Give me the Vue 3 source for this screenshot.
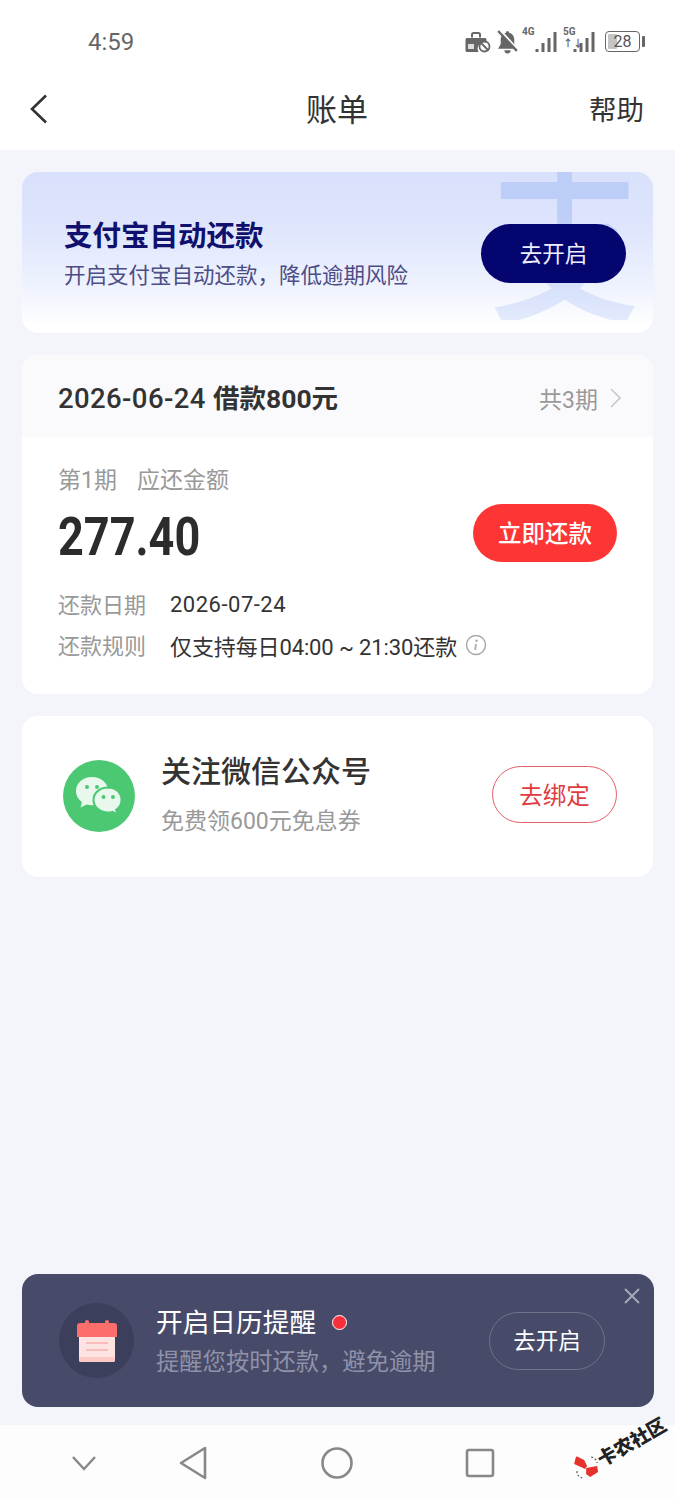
<script setup>
const details = [
  { label: '还款日期', value: '2026-07-24', info: false },
  { label: '还款规则', value: '仅支持每日04:00 ~ 21:30还款', info: true }
]
</script>

<template>
  <div class="page">
    <header class="top">
      <div class="status">
        <span class="time">4:59</span>
        <div class="status-icons">
          <svg class="ic" width="26" height="22" viewBox="0 0 26 22">
            <path d="M2 7h18a1.500 1.500 0 0 1 1.500 1.500V11a7 7 0 0 0-8 10H2a1.500 1.500 0 0 1-1.500-1.500v-11A1.500 1.500 0 0 1 2 7z" fill="#666"/>
            <path d="M7 6.500V3.500Q7 2 8.500 2h5Q15 2 15 3.500v3" fill="none" stroke="#666" stroke-width="2"/>
            <rect x="3" y="13" width="6" height="5" fill="#ddd"/>
            <circle cx="19.500" cy="15.500" r="5" fill="#fff" stroke="#666" stroke-width="1.800"/>
            <path d="M16 12l7 7" stroke="#666" stroke-width="1.800"/>
          </svg>
          <svg class="ic bell" width="23" height="25" viewBox="0 0 22 24">
            <path d="M11 2a1.500 1.500 0 0 1 1.500 1.500c3.500.8 5 3.600 5 7v4l2.500 4.500H2l2.500-4.500v-4c0-3.400 1.500-6.200 5-7A1.500 1.500 0 0 1 11 2z" fill="#666"/>
            <path d="M8 20.500h6a3 3 0 0 1-6 0z" fill="#666"/>
            <path d="M3.500 .5l17 19" stroke="#fff" stroke-width="2"/>
            <path d="M2 2l18 19" stroke="#666" stroke-width="2.200"/>
          </svg>
          <div class="signal">
            <span class="net">4G</span>
            <svg width="24" height="22" viewBox="0 0 24 22"><path d="M2 18v3M8 12v9M14 7v14M20 1v20" stroke="#666" stroke-width="3"/></svg>
          </div>
          <div class="signal five">
            <span class="net">5G<i>↑↓</i></span>
            <svg width="24" height="22" viewBox="0 0 24 22"><path d="M2 18v3M8 12v9M14 7v14M20 1v20" stroke="#666" stroke-width="3"/></svg>
          </div>
          <div class="battery">
            <div class="battery-box"><i class="battery-fill"></i><span>28</span></div>
            <i class="battery-tip"></i>
          </div>
        </div>
      </div>
      <nav class="navbar">
        <svg class="back" width="18" height="30" viewBox="0 0 18 30"><path d="M16 1.500L2 15l14 13.500" fill="none" stroke="#333" stroke-width="2.600"/></svg>
        <h1>账单</h1>
        <span class="help">帮助</span>
      </nav>
    </header>

    <main class="content">
      <section class="banner">
        <span class="banner-mark" aria-hidden="true">支</span>
        <div class="banner-text">
          <h2>支付宝自动还款</h2>
          <p>开启支付宝自动还款&#xFF0C;降低逾期风险</p>
        </div>
        <button class="btn-navy">去开启</button>
      </section>

      <section class="card bill">
        <div class="bill-head">
          <span class="bill-title">2026-06-24 <b>借款800元</b></span>
          <span class="bill-count">共3期
            <svg width="11" height="20" viewBox="0 0 11 20"><path d="M1 1l9 9-9 9" fill="none" stroke="#c8c8c8" stroke-width="1.600"/></svg>
          </span>
        </div>
        <div class="bill-body">
          <div class="due-label"><span>第1期</span><span>应还金额</span></div>
          <div class="amount-row">
            <span class="amount">277.40</span>
            <button class="btn-red">立即还款</button>
          </div>
          <div class="details">
            <div v-for="d in details" :key="d.label" class="detail">
              <span class="detail-label">{{ d.label }}</span>
              <span class="detail-value" :class="d.info ? 'tight' : 'spaced'">{{ d.value }}</span>
              <svg v-if="d.info" class="info" width="22" height="22" viewBox="0 0 22 22">
                <circle cx="11" cy="11" r="9.500" fill="none" stroke="#aaa" stroke-width="1.500"/>
                <circle cx="11.500" cy="6.800" r="1.200" fill="#aaa"/>
                <path d="M11 10l-.8 6" stroke="#aaa" stroke-width="1.800"/>
              </svg>
            </div>
          </div>
        </div>
      </section>

      <section class="card follow">
        <svg class="wechat" width="72" height="72" viewBox="0 0 72 72">
          <circle cx="36" cy="36" r="36" fill="#4cc873"/>
          <path d="M29 17c-9 0-16 6-16 14 0 4.500 2.300 8.500 6 11l-1.500 5.500 6-3c1.800.5 3.600.8 5.500.8 9 0 16-6 16-14.300S38 17 29 17z" fill="#e9f8ed"/>
          <path d="M45 27.500c-8.300 0-14.500 5.500-14.500 12.500S36.700 52.500 45 52.500c1.500 0 3-.2 4.400-.6l5 2.600-1.300-4.700c3.400-2.300 5.400-5.800 5.400-9.800 0-7-5.600-12.500-13.500-12.500z" fill="#e9f8ed" stroke="#4cc873" stroke-width="2"/>
          <circle cx="24" cy="27" r="2" fill="#4cc873"/><circle cx="34" cy="27" r="2" fill="#4cc873"/>
          <circle cx="40.500" cy="37" r="2" fill="#4cc873"/><circle cx="50" cy="37" r="2" fill="#4cc873"/>
        </svg>
        <div class="follow-text">
          <h3>关注微信公众号</h3>
          <p>免费领600元免息券</p>
        </div>
        <button class="btn-outline">去绑定</button>
      </section>
    </main>

    <section class="reminder">
      <div class="cal-wrap">
        <svg width="42" height="44" viewBox="0 0 42 44">
          <rect x="3" y="10" width="36" height="33" rx="2" fill="#fde3e1"/>
          <rect x="3" y="38" width="36" height="5" rx="2" fill="#fbc9c6"/>
          <path d="M1 7a3 3 0 0 1 3-3h34a3 3 0 0 1 3 3v11H1z" fill="#fb6e6b"/>
          <rect x="9" y="1" width="4" height="6" rx="2" fill="#fb6e6b"/>
          <rect x="29" y="1" width="4" height="6" rx="2" fill="#fb6e6b"/>
          <path d="M10 24h22M10 31h22" stroke="#f8bdb9" stroke-width="2"/>
        </svg>
      </div>
      <div class="reminder-text">
        <h3>开启日历提醒<i class="dot"></i></h3>
        <p>提醒您按时还款&#xFF0C;避免逾期</p>
      </div>
      <button class="btn-ghost">去开启</button>
      <svg class="close" width="16" height="16" viewBox="0 0 16 16"><path d="M1 1l14 14M15 1L1 15" stroke="#a9abbc" stroke-width="1.800"/></svg>
    </section>

    <footer class="sysnav">
      <svg width="26" height="18" viewBox="0 0 26 18"><path d="M2 3l11 12L24 3" fill="none" stroke="#888" stroke-width="2.400"/></svg>
      <svg width="28" height="34" viewBox="0 0 28 34"><path d="M26 2L2 17l24 15z" fill="none" stroke="#888" stroke-width="2.600" stroke-linejoin="round"/></svg>
      <svg width="32" height="32" viewBox="0 0 32 32"><circle cx="16" cy="16" r="14.500" fill="none" stroke="#888" stroke-width="2.600"/></svg>
      <svg width="30" height="30" viewBox="0 0 30 30"><rect x="2" y="2" width="26" height="26" rx="2" fill="none" stroke="#888" stroke-width="2.600"/></svg>
    </footer>

    <div class="watermark">
      <svg width="28" height="28" viewBox="0 0 28 28">
        <g transform="rotate(30 14 14)">
          <path d="M13 16L2 11l2-8 8 4 3 6z" fill="#e5322d"/>
          <path d="M14 15l11-2 1 6-8 5-4-3z" fill="#e5322d"/>
          <path d="M5 18q-1 5 5 7M19 4q5 1 6 6" fill="none" stroke="#555" stroke-width="1.200" stroke-dasharray="2 2"/>
        </g>
      </svg>
      <span>卡农社区</span>
    </div>
  </div>
</template>

<style>
html, body { margin: 0; background: #f4f5fa; }
</style>

<style scoped>
* { box-sizing: border-box; }
h1, h2, h3, p { margin: 0; font-weight: 400; }
button { border: 0; padding: 0; font-family: inherit; background: none; display: flex; align-items: center; justify-content: center; }

.page {
  position: relative;
  width: 675px;
  height: 1500px;
  display: flex;
  flex-direction: column;
  overflow: hidden;
  background: #f4f5fa;
  color: #333;
  font-family: Roboto, "Noto Sans CJK SC", sans-serif;
}

.top { background: #fff; height: 150px; display: flex; flex-direction: column; }
.status { height: 75px; display: flex; align-items: center; justify-content: space-between; padding: 8px 30px 0 88px; }
.time { font-size: 24px; color: #666; }
.status-icons { display: flex; align-items: center; gap: 5px; }
.ic { display: block; }
.bell { margin-right: 2px; }
.signal { position: relative; width: 30px; height: 24px; display: flex; justify-content: flex-end; align-items: flex-end; margin-bottom: 2px; }
.signal svg { margin-right: -3px; }
.net { position: absolute; left: -4px; top: -2px; font-size: 10px; line-height: 10px; font-weight: 700; color: #666; }
.net i { display: block; font-style: normal; font-size: 10px; line-height: 10px; margin-top: 2px; }
.five { margin-left: 3px; }
.five .net { left: -1px; }
.battery { display: flex; align-items: center; gap: 2px; margin-left: 6px; }
.battery-box { position: relative; width: 35px; height: 21px; border: 1.500px solid #666; border-radius: 4px; display: flex; align-items: center; justify-content: center; overflow: hidden; }
.battery-box span { position: relative; font-size: 16px; line-height: 18px; color: #555; }
.battery-fill { position: absolute; left: 2px; top: 2px; bottom: 2px; width: 9px; background: #c4c4c4; border-radius: 1px; }
.battery-tip { width: 3px; height: 11px; background: #666; border-radius: 1px; }

.navbar { flex: 1; display: grid; grid-template-columns: 1fr auto 1fr; align-items: center; padding: 0 31px 8px 30px; }
.navbar h1 { font-size: 31px; line-height: 42px; color: #333; margin-top: 4px; }
.back { display: block; }
.help { justify-self: end; font-size: 27.500px; line-height: 40px; color: #333; margin-top: 4px; }

.content { display: flex; flex-direction: column; gap: 22px; padding: 22px 22px 0; }

.banner {
  position: relative;
  height: 161px;
  border-radius: 16px;
  overflow: hidden;
  display: flex;
  align-items: center;
  justify-content: space-between;
  padding: 0 27px 0 42px;
  background: linear-gradient(180deg, #d9e0fb 0%, #dde4fc 30%, #eef2fe 70%, #ffffff 95%);
}
.banner-mark {
  position: absolute;
  left: 468px;
  top: -32px;
  font-size: 150px;
  line-height: 150px;
  font-weight: 500;
  font-family: "Noto Sans CJK SC", sans-serif;
  color: #bccdf8;
  transform: scaleY(1.2);
  transform-origin: top;
  -webkit-mask-image: linear-gradient(180deg, #000 40%, rgba(0,0,0,.55) 65%, rgba(0,0,0,.4) 100%);
  mask-image: linear-gradient(180deg, #000 40%, rgba(0,0,0,.55) 65%, rgba(0,0,0,.4) 100%);
}
.banner-text { position: relative; padding-top: 4px; }
.banner h2 { font-size: 28.500px; line-height: 40px; font-weight: 700; color: #10106e; }
.banner p { font-size: 21.500px; line-height: 32px; margin-top: 3px; color: #4d4d86; }
.btn-navy { position: relative; width: 145px; height: 59px; border-radius: 30px; background: #05056f; color: #eef; font-size: 22.500px; margin-top: 2px; padding-bottom: 4px; }

.card { background: #fff; border-radius: 16px; overflow: hidden; }
.bill-head { height: 82px; background: #fafafc; display: flex; align-items: center; justify-content: space-between; padding: 5px 32px 0 36px; }
.bill-title { font-size: 27.500px; letter-spacing: .4px; line-height: 40px; font-weight: 500; color: #333; }
.bill-title b { font-size: 26.500px; letter-spacing: 0; font-weight: 700; }
.bill-count { display: flex; align-items: center; gap: 12px; font-size: 23px; color: #999; margin-top: -2px; }
.bill-body { padding: 24px 36px 0; height: 257px; }
.due-label { display: flex; gap: 20px; font-size: 23px; line-height: 36px; color: #999; margin-top: 2px; }
.amount-row { display: flex; align-items: center; justify-content: space-between; margin-top: 5px; height: 58px; }
.amount { font-size: 53px; font-weight: 700; color: #2c2c2c; margin-top: 8px; transform: scaleX(.85); transform-origin: left center; }
.btn-red { width: 144px; height: 58px; border-radius: 29px; background: #fd3535; color: #fff; font-size: 23.500px; font-weight: 500; font-family: "Noto Sans CJK SC", sans-serif; padding-bottom: 2px; }
.details { margin-top: 24px; display: flex; flex-direction: column; gap: 5px; }
.detail { display: flex; align-items: center; height: 36px; }
.detail-label { width: 112px; font-size: 22px; color: #999; margin-top: -2px; }
.detail-value { color: #333; font-size: 22px; }
.spaced { letter-spacing: .5px; }
.tight { letter-spacing: -.12px; margin-top: -1px; }
.info { margin-left: 8px; }

.follow { height: 161px; display: flex; align-items: center; padding: 0 36px 0 41px; }
.wechat { display: block; flex: none; margin-top: -2px; }
.follow-text { flex: 1; margin-left: 26px; margin-top: -7px; }
.follow h3 { font-size: 30px; line-height: 42px; font-weight: 500; color: #333; font-family: "Noto Sans CJK SC", sans-serif; }
.follow p { font-size: 23px; line-height: 34px; margin-top: 15px; color: #999; }
.btn-outline { width: 125px; height: 57px; border: 1px solid #e2606a; border-radius: 29px; color: #e0393f; font-size: 23.500px; background: #fff; margin-top: -4px; padding-bottom: 2px; }

.reminder {
  position: relative;
  margin: auto 21px 0 22px;
  height: 133px;
  flex: none;
  background: #474a68;
  border-radius: 16px;
  display: flex;
  align-items: center;
  padding: 0 49px 0 37px;
}
.cal-wrap { width: 75px; height: 75px; border-radius: 50%; background: #3c3f5c; display: flex; align-items: center; justify-content: center; flex: none; }
.reminder-text { flex: 1; margin-left: 22px; }
.reminder h3 { display: flex; align-items: center; font-size: 26.700px; line-height: 40px; color: #fff; }
.dot { width: 15px; height: 15px; margin-left: 16px; border-radius: 50%; background: #f5303a; border: 1.500px solid #fff; }
.reminder p { font-size: 23.300px; line-height: 34px; margin-top: 2px; color: #8f92a8; }
.btn-ghost { width: 116px; height: 58px; border: 1px solid #6f7289; border-radius: 29px; color: #fff; font-size: 22.500px; margin-top: 1px; padding-bottom: 4px; }
.close { position: absolute; right: 14px; top: 14px; }

.sysnav { margin-top: 18px; height: 75px; flex: none; background: #fdfdfd; display: flex; align-items: center; padding-left: 71px; }
.sysnav svg { display: block; }
.sysnav svg:nth-child(2) { margin-left: 82px; }
.sysnav svg:nth-child(3) { margin-left: 114px; }
.sysnav svg:nth-child(4) { margin-left: 112px; }

.watermark { position: absolute; left: 574px; top: 1460px; display: flex; align-items: center; transform: rotate(-30deg); transform-origin: left center; color: #222; }
.watermark span { font-size: 19px; line-height: 28px; font-weight: 900; font-family: "Noto Sans CJK SC", sans-serif; white-space: nowrap; }
</style>
